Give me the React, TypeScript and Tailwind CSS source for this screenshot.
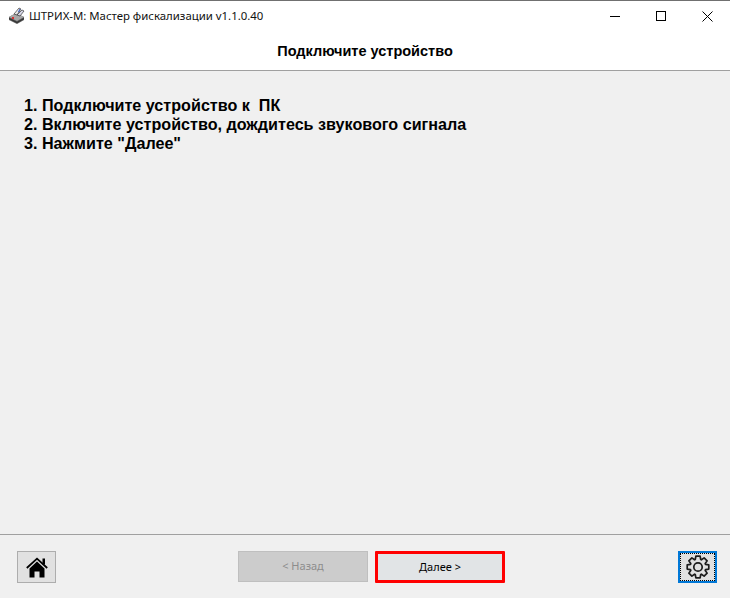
import React from "react";

const sans = "font-['Liberation_Sans',Arial,sans-serif]";
const ui = "font-['Noto_Sans','Open_Sans',sans-serif]";

function AppIcon() {
  return (
    <svg width="18" height="18" viewBox="0 0 18 18" className="shrink-0">
      <path d="M1 10 L8 6 L16 10 L16 13 L9 17 L1 13 Z" fill="#5a5a5a" />
      <path d="M1 10 L8 6 L16 10 L9 14 Z" fill="#a8a8a8" />
      <path d="M1 11 L9 15 L16 11 L16 12 L9 16 L1 12 Z" fill="#2e2e2e" />
      <path d="M6 7 L11 1 L13 2 L9 8 Z" fill="#e8e8e8" stroke="#333" strokeWidth="0.7" />
      <path d="M9 8 L14 3 L16 4 L12 9 Z" fill="#d8d8e8" stroke="#333" strokeWidth="0.7" />
      <path d="M12 2 L10.5 5" stroke="#2a50c8" strokeWidth="1" />
      <rect x="4" y="10" width="2" height="2" fill="#d83030" />
    </svg>
  );
}

function HomeIcon() {
  return (
    <svg width="22" height="21" viewBox="0 0 22 21">
      <path d="M0.8 11 L11 1.6 L21.2 11" fill="none" stroke="#000" strokeWidth="1.8" />
      <rect x="16.5" y="1.5" width="2.5" height="6" fill="#000" />
      <path d="M3.5 11.5 L11 4.6 L18.5 11.5 V20.5 H13.5 V14.5 H8.5 V20.5 H3.5 Z" fill="#000" />
    </svg>
  );
}

function gearPath() {
  const teeth = 8;
  const cx = 12;
  const cy = 12;
  const outer = 11;
  const inner = 8;
  const step = (Math.PI * 2) / teeth;
  const pts: string[] = [];
  for (let i = 0; i < teeth; i++) {
    const a = i * step - Math.PI / 2;
    const offsets: [number, number][] = [
      [inner, -0.46],
      [outer, -0.26],
      [outer, 0.26],
      [inner, 0.46],
    ];
    for (const [r, o] of offsets) {
      const t = a + o * step * 0.95;
      pts.push(`${(cx + r * Math.cos(t)).toFixed(2)} ${(cy + r * Math.sin(t)).toFixed(2)}`);
    }
  }
  return `M${pts.join(" L")} Z`;
}

function GearIcon() {
  return (
    <svg width="24" height="24" viewBox="0 0 24 24" fill="none" stroke="#1c1c1c" strokeWidth="1.7" strokeLinejoin="round">
      <path d={gearPath()} />
      <circle cx="12" cy="12" r="4.2" />
    </svg>
  );
}

export default function App() {
  return (
    <div className={`w-[730px] h-[598px] flex flex-col overflow-hidden bg-[#f0f0f0] ${sans}`}>
      <header className="h-[71px] shrink-0 bg-white border-b border-[#a0a0a0] flex flex-col">
        <div className="h-[31px] shrink-0 flex items-center justify-between border-t border-[#707070]">
          <div className="flex items-center pl-[8px] gap-[3px]">
            <AppIcon />
            <span className={`text-[11.4px] leading-none text-[#111] ${ui}`}>ШТРИХ-М: Мастер фискализации v1.1.0.40</span>
          </div>
          <div className="flex items-center">
            <div className="w-[46px] h-[30px] flex items-center justify-center">
              <div className="w-[10px] h-px bg-black" />
            </div>
            <div className="w-[46px] h-[30px] flex items-center justify-center">
              <div className="w-[10px] h-[10px] border border-black" />
            </div>
            <div className="w-[46px] h-[30px] flex items-center justify-center">
              <svg width="11" height="11" viewBox="0 0 11 11" stroke="#000" strokeWidth="1">
                <path d="M0.5 0.5 L10.5 10.5 M10.5 0.5 L0.5 10.5" />
              </svg>
            </div>
          </div>
        </div>
        <div className="flex-1 flex items-center justify-center pt-[1px]">
          <h1 className="text-[14.5px] font-bold leading-none text-black">Подключите устройство</h1>
        </div>
      </header>

      <main className="flex-1 pl-[24px] pt-[25px] text-[16.15px] font-bold leading-[19px] text-black">
        <p>1. Подключите устройство к&nbsp; ПК</p>
        <p>2. Включите устройство, дождитесь звукового сигнала</p>
        <p>3. Нажмите "Далее"</p>
      </main>

      <footer className="h-[64px] shrink-0 border-t border-[#a0a0a0] flex items-start justify-between pt-[16px] pl-[17px] pr-[13px]">
        <button className="w-[39px] h-[32px] flex items-center justify-center bg-[#e1e1e1] border border-[#adadad]">
          <HomeIcon />
        </button>
        <div className="flex items-start gap-[7px] ml-[9px]">
          <button className={`w-[130px] h-[31px] bg-[#cccccc] border border-[#bfbfbf] text-[11px] text-[#8c8c8c] ${ui}`}>&lt; Назад</button>
          <button className={`w-[130px] h-[32px] bg-[#e1e4e6] border-[3px] border-[#ff0000] rounded-[1px] text-[11px] text-black ${ui}`}>Далее &gt;</button>
        </div>
        <button className="w-[39px] h-[32px] flex items-center justify-center bg-[#e1e1e1] border-2 border-[#0078d7] outline-dotted outline-1 -outline-offset-3 outline-black">
          <GearIcon />
        </button>
      </footer>
    </div>
  );
}
